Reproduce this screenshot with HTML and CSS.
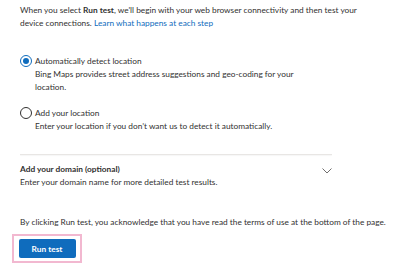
FILE: index.html
```html
<!DOCTYPE html>
<html>
<head>
<meta charset="utf-8">
<link rel="stylesheet" href="styles.css">
</head>
<body>
<div class="page">
  <p class="intro">When you select <b>Run test</b>, we'll begin with your web browser connectivity and then test your device connections. <a href="#">Learn what happens at each step</a></p>

  <div class="options">
    <div class="option">
      <span class="radio checked"></span>
      <div class="opt-text">
        <div class="opt-label">Automatically detect location</div>
        <div class="opt-desc">Bing Maps provides street address suggestions and geo-coding for your location.</div>
      </div>
    </div>
    <div class="option">
      <span class="radio"></span>
      <div class="opt-text">
        <div class="opt-label">Add your location</div>
        <div class="opt-desc">Enter your location if you don’t want us to detect it automatically.</div>
      </div>
    </div>
  </div>

  <div class="divider"></div>

  <div class="domain">
    <div class="domain-text">
      <div class="domain-title">Add your domain (optional)</div>
      <div class="domain-desc">Enter your domain name for more detailed test results.</div>
    </div>
    <svg class="chevron" width="10" height="6" viewBox="0 0 10 6"><path d="M0.5 0.5 L5 5 L9.5 0.5" fill="none" stroke="#605e5c" stroke-width="0.9"/></svg>
  </div>

  <p class="terms">By clicking Run test, you acknowledge that you have read the terms of use at the bottom of the page.</p>

  <div class="btn-wrap">
    <button class="btn">Run test</button>
  </div>
</div>
</body>
</html>
```
FILE: styles.css
```css
* { box-sizing: border-box; }
html, body { margin: 0; padding: 0; background: #fff; }
body {
  font-family: Lato, "Noto Sans", sans-serif;
  font-size: 8.3px;
  line-height: 13px;
  color: #323130;
}
.page { padding: 4px 0 0 20px; width: 400px; }
p { margin: 0; }
.intro { width: 345px; }
.intro b { font-weight: 700; }
.intro a { color: #0f6cbd; text-decoration: none; }
.options { margin-top: 25px; display: flex; flex-direction: column; gap: 13px; }
.option { display: flex; gap: 3px; }
.radio {
  flex: none;
  width: 12px; height: 12px; margin-top: 0px;
  border: 1px solid #323130; border-radius: 50%;
  display: flex; align-items: center; justify-content: center;
}
.radio.checked { border-color: #0f6cbd; }
.radio.checked::after { content: ""; width: 6px; height: 6px; border-radius: 50%; background: #0f6cbd; }
.opt-text { width: 280px; }
.divider { margin-top: 21px; width: 312px; height: 1px; background: #e8e6e4; box-shadow: 0 1px 1px rgba(0,0,0,0.04); }
.domain { margin-top: 8px; width: 312px; display: flex; justify-content: space-between; align-items: flex-start; }
.domain-title { font-weight: 700; }
.chevron { margin-top: 5px; }
.terms { margin-top: 27px; width: 375px; }
.btn-wrap {
  margin-top: 5px; margin-left: -8px;
  width: 70px; height: 29px;
  border: 2px solid #f2b8d0;
  display: flex; align-items: center; justify-content: center;
}
.btn {
  width: 57px; height: 19px;
  background: #0f6cbd; color: #fff; border: none; border-radius: 2px;
  font-family: inherit; font-size: 8.3px; font-weight: 700; padding: 0;
}
```
